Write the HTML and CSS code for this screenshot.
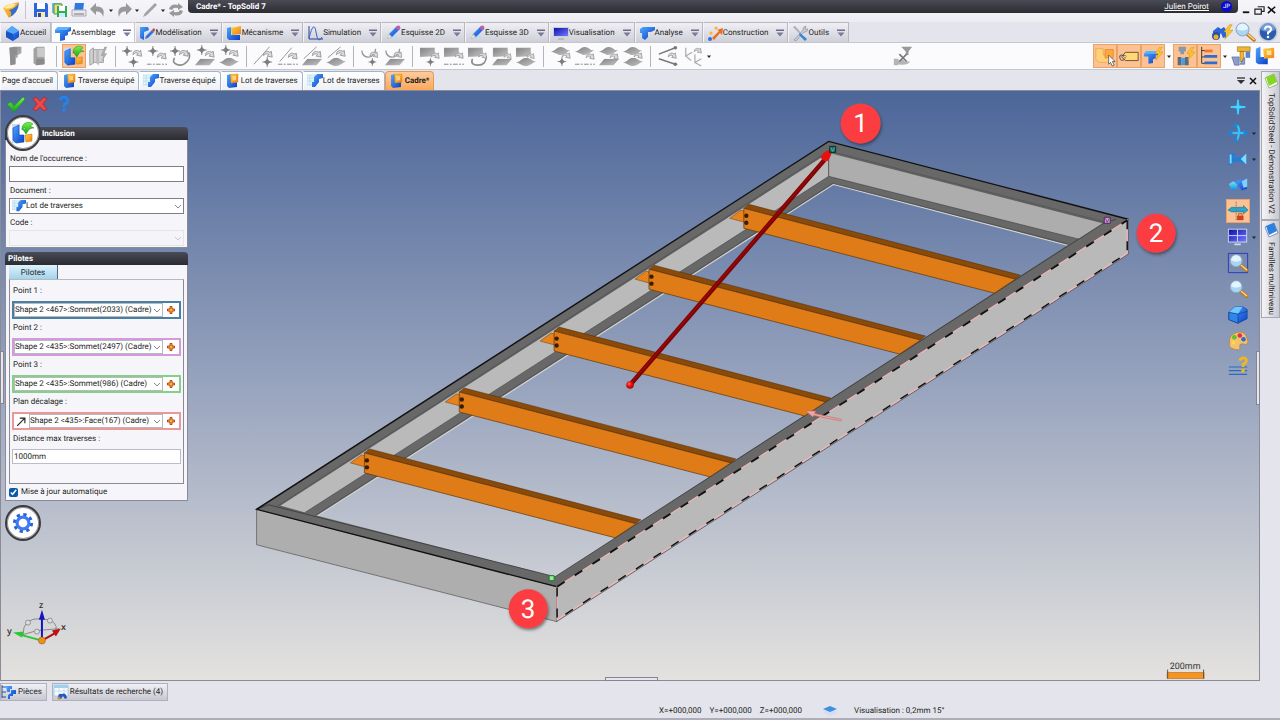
FILE: index.html
```html
<!doctype html>
<html lang="fr">
<head>
  <meta charset="UTF-8" />
  <meta name="viewport" content="width=device-width, initial-scale=1.0" />
  <title>Cadre* - TopSolid 7</title>
  <link rel="stylesheet" href="styles.css">
</head>
<body>
  <svg class="defs" aria-hidden="true">
    <defs>
      <linearGradient id="gBlue" x1="0" y1="0" x2="1" y2="1"><stop offset="0" stop-color="#4fa8ff"/><stop offset="1" stop-color="#0a3fc8"/></linearGradient>
      <linearGradient id="gOrange" x1="0" y1="0" x2="1" y2="1"><stop offset="0" stop-color="#ffd23c"/><stop offset="1" stop-color="#f07f14"/></linearGradient>
      <linearGradient id="gGray" x1="0" y1="0" x2="1" y2="1"><stop offset="0" stop-color="#808080"/><stop offset="1" stop-color="#c4c4c4"/></linearGradient>
      <linearGradient id="gCyan" x1="0" y1="0" x2="0" y2="1"><stop offset="0" stop-color="#6fe6ff"/><stop offset="1" stop-color="#1489dc"/></linearGradient>
      <linearGradient id="gGreen" x1="0" y1="0" x2="0" y2="1"><stop offset="0" stop-color="#7df04a"/><stop offset="1" stop-color="#17a81b"/></linearGradient>
      <linearGradient id="gScreen" x1="0" y1="0" x2="1" y2="1"><stop offset="0" stop-color="#1010a8"/><stop offset="1" stop-color="#6f7cff"/></linearGradient>
    </defs>

    <!-- grey building blocks, combined in the tool icons -->
    <symbol id="star" viewBox="0 0 10 10"><path d="M5 0v10M0 5h10" stroke="#8a8a8a"/><path d="M5 1.500L6.500 3.500L8.500 5L6.500 6.500L5 8.500L3.500 6.500L1.500 5L3.500 3.500Z" fill="#7c7c7c"/></symbol>
    <symbol id="swirl" viewBox="0 0 10 10"><path d="M.8 6C.8 2 4.500 .5 7.500 3L8.500 1.500L9.500 7.500L4.500 6.500L6 5C4.500 3.500 3 4 .8 6Z" fill="#dcdcdc" stroke="#8e8e8e" stroke-width=".8"/></symbol>
    <symbol id="sheet" viewBox="0 0 22 8"><path d="M6 0H22L16 7H0Z" fill="url(#gGray)"/></symbol>
    <symbol id="wave" viewBox="0 0 22 9"><path d="M0 5C5 5 6 0 11 0S17 4 22 4C17 6 15 9 11 9S5 6 0 5Z" fill="url(#gGray)"/></symbol>
    <symbol id="dash" viewBox="0 0 22 2"><path d="M0 1h22" stroke="#aaa" stroke-width="1.500" stroke-dasharray="5 1.500 2 1.500"/></symbol>
    <symbol id="plate" viewBox="0 0 16 11"><path d="M0 1H15V9L0 10Z" fill="url(#gGray)" stroke="#aaa" stroke-width=".6"/></symbol>
    <symbol id="hook" viewBox="0 0 18 12"><path d="M1 3C1 13 16 13 16 1" fill="none" stroke="#999" stroke-width="1.500"/></symbol>

    <!-- shared colour icons -->
    <symbol id="inclusion" viewBox="0 0 24 24"><path d="M1 3H7L9 2V22H1Z" fill="#cdd9ee"/><path d="M2 7L8 4V14H13V21L5 22L2 19Z" fill="url(#gBlue)" stroke="#0b46b8" stroke-width=".6"/><path d="M14 14L21 13V20L15 21Z" fill="url(#gOrange)" stroke="#d4781a" stroke-width=".6"/><path d="M11 9C10 2 18 -1 22 3L19 5L23 7C20.500 7 19.500 7.500 18 8.500L15 13L11.500 8L14.500 8.500C14 6.500 13 6 11 9Z" fill="url(#gGreen)" stroke="#0e8d16" stroke-width=".5"/></symbol>
    <symbol id="part" viewBox="0 0 16 16"><path d="M2 2L6 1V9H12V14L4 15L2 13Z" fill="url(#gBlue)"/><path d="M5.500 1.500L13 1V9L6 10Z" fill="url(#gOrange)" stroke="#e0861c" stroke-width=".5"/><path d="M7.500 3L11 3V7L7.500 7.500Z" fill="#ffd08a"/></symbol>
    <symbol id="beam" viewBox="0 0 16 16"><path d="M0 2H9V12H0Z" fill="#e2f5fc" stroke="#a7d3e6" stroke-width=".6"/><path d="M0 5H9M0 8H9M3 2V12" stroke="#a7d3e6" stroke-width=".6"/><path d="M7 4L10 1H16V5L12 6V9L8 14H5V9H7Z" fill="url(#gBlue)"/></symbol>
    <symbol id="frame" viewBox="0 0 16 16"><path d="M0 5L3 2H16V6L13 7V10L10 11V15L5 16V8H0Z" fill="url(#gBlue)"/><path d="M0 5L3 2H16L12 5Z" fill="#57b4ff"/></symbol>
    <symbol id="pencil" viewBox="0 0 16 16"><path d="M1 14Q5 11 13 13" stroke="#b9d9ff" stroke-width="2" fill="none"/><path d="M2 14L4 9L12 1L15 4L7 12Z" fill="url(#gBlue)"/><path d="M12 1Q14 0 15 1.500T15 4L13.500 5.500L10.500 2.500Z" fill="#c05fae"/><path d="M2 14L4 9L7 12Z" fill="#f5deb5"/></symbol>
    <symbol id="down" viewBox="0 0 8 8"><path d="M0 .5H8V2H0Z" fill="#6c6a8c"/><path d="M.5 3.500H7.500L4 7.500Z" fill="#7a7899"/></symbol>
    <symbol id="caret" viewBox="0 0 4 3"><path d="M0 .5H4L2 3Z" fill="#222"/></symbol>
    <symbol id="chev" viewBox="0 0 8 6"><path d="M1 1L4 4L7 1" fill="none" stroke="#888"/></symbol>
    <symbol id="plus" viewBox="0 0 8 8"><path d="M3 .5H5V3H7.500V5H5V7.500H3V5H.5V3H3Z" fill="#ffb32c" stroke="#b5451a" stroke-width="1"/></symbol>
    <symbol id="bolt" viewBox="0 0 10 16"><path d="M6 0L0 8H4L1 16L10 6H5L9 0Z" fill="#ffc827" stroke="#c98d13" stroke-width=".6"/></symbol>
    <symbol id="lens" viewBox="0 0 22 20"><path d="M13 12L20 18" stroke="#b8761c" stroke-width="3.500" stroke-linecap="round"/><path d="M14 12.500L20 17.500" stroke="#ffd873" stroke-width="1.500" stroke-linecap="round"/><circle cx="8.500" cy="7.500" r="6.500" fill="#a9d5f5" stroke="#8ea9bd"/><path d="M3 7A5.500 5.500 0 0 1 14 7Q8 10 3 7Z" fill="#e3f4ff"/></symbol>
  </svg>

  <header class="titlebar">
    <div class="quick">
      <svg class="logo" viewBox="0 0 18 18"><path d="M1 7L5 4L17 1L14 10L7 17Z" fill="url(#gOrange)"/><path d="M7 9Q13 8 17 2Q16 12 8 16Q11 12 7 9Z" fill="#2f6fd0"/><path d="M2 7Q7 2 14 3Q10 9 2 7Z" fill="#ffe9a0"/></svg>
      <span class="sep"></span>
      <button aria-label="Enregistrer"><svg viewBox="0 0 16 16"><path d="M1 1H14L15 3V15H1Z" fill="#2b66e0"/><path d="M4 1H12V7H4Z" fill="#fff"/><path d="M4 10H12V15H4Z" fill="#ffe9a0"/><path d="M5 11h3v4H5Z" fill="#284b9a"/></svg></button>
      <button aria-label="Enregistrer tout"><svg viewBox="0 0 16 16"><path d="M0 1H9V11H0Z" fill="#7fb0e8"/><path d="M2 2H10V12H2Z" fill="#f5da6e" stroke="#3a9b5c"/><path d="M5 4H15V15H5Z" fill="#2fae54"/><path d="M7 4H13V9H7Z" fill="#fff"/><path d="M7 11H13V15H7Z" fill="#cdeaff"/></svg></button>
      <button aria-label="Imprimer"><svg viewBox="0 0 16 16"><path d="M4 1H13L12 9H3Z" fill="#2d7be0"/><path d="M1 8H15V14H1Z" fill="#e8e8ec" stroke="#a9a9b3"/><path d="M3 12H13" stroke="#777"/></svg></button>
      <button class="wide" aria-label="Annuler"><svg viewBox="0 0 16 16"><path d="M0 7L6 1V4.500Q16 4 13 15Q12 9 6 9.500V13Z" fill="#999"/></svg><svg class="caret"><use href="#caret"/></svg></button>
      <button class="wide" aria-label="Rétablir"><svg viewBox="0 0 16 16"><path d="M16 7L10 1V4.500Q0 4 3 15Q4 9 10 9.500V13Z" fill="#999"/></svg><svg class="caret"><use href="#caret"/></svg></button>
      <button class="wide" aria-label="Esquisser"><svg viewBox="0 0 16 16"><path d="M1 15L3 11L13 1L15 3L5 13Z" fill="#a2a2a2"/></svg><svg class="caret"><use href="#caret"/></svg></button>
      <button aria-label="Actualiser"><svg viewBox="0 0 16 16"><path d="M1 7Q3 1 10 3V1L15 5L10 8V6Q5 5 4 8ZM15 9Q13 15 6 13V15L1 11L6 8V10Q11 11 12 8Z" fill="#999"/></svg></button>
    </div>
    <div class="title">
      <b>Cadre* - TopSolid 7</b>
      <a class="user" href="#">Julien Poirot</a>
      <span class="avatar">JP</span>
    </div>
    <div class="winbtns">
      <button aria-label="Réduire"><svg viewBox="0 0 12 12"><path d="M2 9h7" stroke="#111" stroke-width="2"/></svg></button>
      <button aria-label="Restaurer"><svg viewBox="0 0 12 12"><path d="M4 3H11V8H8M1 5.500H8V11H1Z" fill="none" stroke="#222" stroke-width="1.300"/></svg></button>
      <button aria-label="Fermer"><svg viewBox="0 0 12 12"><path d="M2 3L10 10M10 3L2 10" stroke="#111" stroke-width="1.800"/></svg></button>
    </div>
  </header>

  <nav class="ribbon">
    <button class="home"><svg viewBox="0 0 16 16"><path d="M2 6L8 1L15 6V12L9 16L2 12Z" fill="url(#gBlue)"/><path d="M2 6L8 1L15 6L9 9Z" fill="#58a8f8"/><path d="M9 9V16L2 12V6Z" fill="#1a54c4"/></svg>Accueil</button>
    <button class="active"><svg viewBox="0 0 16 16"><use href="#frame"/></svg>Assemblage<svg class="down"><use href="#down"/></svg></button>
    <button><svg viewBox="0 0 16 16"><path d="M1 2H9L10 5L5 7V15L1 13Z" fill="url(#gBlue)"/><path d="M6 14L7 11L13 5L15 7L9 13Z" fill="#2f74e0"/><path d="M13 5L15 3L16 5L15 7Z" fill="#c33"/></svg>Modélisation<svg class="down"><use href="#down"/></svg></button>
    <button><svg viewBox="0 0 16 16"><path d="M1 3L5 2V10H14V15H3L1 13Z" fill="url(#gBlue)"/><path d="M5 3L15 1V9L6 10Z" fill="url(#gOrange)"/></svg>Mécanisme<svg class="down"><use href="#down"/></svg></button>
    <button><svg viewBox="0 0 16 16"><path d="M2 1V14H16" fill="none" stroke="#2040a0"/><path d="M2 13Q7-6 9 7T15 12" fill="none" stroke="#3b62c8"/></svg>Simulation<svg class="down"><use href="#down"/></svg></button>
    <button><svg viewBox="0 0 16 16"><use href="#pencil"/></svg>Esquisse 2D<svg class="down"><use href="#down"/></svg></button>
    <button><svg viewBox="0 0 16 16"><use href="#pencil"/></svg>Esquisse 3D<svg class="down"><use href="#down"/></svg></button>
    <button><svg viewBox="0 0 16 16"><path d="M0 2H16V12H0Z" fill="#c9cede"/><path d="M1 3H15V11H1Z" fill="url(#gScreen)"/><path d="M5 13H11V15H5Z" fill="#bbb"/></svg>Visualisation<svg class="down"><use href="#down"/></svg></button>
    <button><svg viewBox="0 0 16 16"><path d="M1 4L4 2H16V5L12 7H9V12L6 15L3 13V8H1Z" fill="url(#gBlue)"/></svg>Analyse<svg class="down"><use href="#down"/></svg></button>
    <button><svg viewBox="0 0 16 16"><path d="M5 13L12 6L10 5L16 3L15 10L13 8L7 15Z" fill="#ef6a1a"/><circle cx="3" cy="14" r="2" fill="#2a74e8"/><circle cx="4" cy="8" r="1.500" fill="#ffb020"/><circle cx="9" cy="3" r="1.500" fill="#ffb020"/></svg>Construction<svg class="down"><use href="#down"/></svg></button>
    <button><svg viewBox="0 0 16 16"><path d="M2 15L11 5Q10 2 14 1L13 4L16 4Q15 8 12 7L4 16Z" fill="#c9ccd4" stroke="#868b96" stroke-width=".6"/><path d="M1 2L3 1L9 8L8 9Z" fill="#aab"/><path d="M8 8L15 14L13 16L7 10Z" fill="#2f86d6"/></svg>Outils<svg class="down"><use href="#down"/></svg></button>
    <div class="find">
      <button aria-label="Recherche rapide"><svg viewBox="0 0 22 20"><path d="M2 9L7 5L10 7L13 5L15 8V15L12 16L10 11L7 16H2Z" fill="#2c65d8"/><circle cx="5" cy="14" r="4" fill="#2450b0"/><circle cx="5" cy="15" r="2.500" fill="#f3b01c"/><use href="#bolt" x="13" y="1" width="9" height="18"/></svg></button>
      <button aria-label="Rechercher"><svg viewBox="0 0 22 20"><use href="#lens"/></svg></button>
      <button aria-label="Aide"><svg viewBox="0 0 20 20"><circle cx="10" cy="10" r="9" fill="#2a5cab" stroke="#c5cad6" stroke-width="1.500"/><path d="M3 8A7 7 0 0 1 17 8Q10 11 3 8Z" fill="#6f9bd8"/><path d="M7 7.500Q7 4.500 10 4.500T13 7.500Q13 9 10 10.500V12.500" fill="none" stroke="#fff" stroke-width="2"/><circle cx="10" cy="15" r="1.300" fill="#fff"/></svg></button>
    </div>
  </nav>

  <div class="toolbar">
    <button aria-label="Profil"><svg viewBox="0 0 24 24"><path d="M6 3L11 2H19V9L15 11V14H13V21L7 22Z" fill="url(#gGray)"/><path d="M6 3H14V11H12V21L7 22Z" fill="#8e8e8e"/></svg></button>
    <button aria-label="Pièce"><svg viewBox="0 0 24 24"><path d="M6 4L9 2H18V21L9 22L6 20Z" fill="#a2a2a2"/><path d="M10 3H18V13H10Z" fill="#c9c9c9"/><path d="M9 15H18V21L9 22Z" fill="#8a8a8a"/></svg></button>
    <span class="sep"></span>
    <button class="on" aria-label="Inclusion"><svg viewBox="0 0 24 24"><use href="#inclusion"/></svg></button>
    <button aria-label="Inclusion rapide"><svg viewBox="0 0 24 24"><path d="M3 6L7 3V20L3 22ZM7 5H18V19H7Z" fill="#d2d2d2" stroke="#a2a2a2"/><path d="M10 6L13 4V22L10 20Z" fill="#bcbcbc"/><path d="M19 2L15 12H18L15 20L22 9H19L22 2Z" fill="#aaa"/></svg></button>
    <span class="sep"></span>
    <button aria-label="Point vers point"><svg viewBox="0 0 24 24"><use href="#star" x="0" y="1" width="11" height="11"/><use href="#swirl" x="10" y="4" width="13" height="11"/><use href="#star" x="7" y="13" width="11" height="11"/></svg></button>
    <button aria-label="Point vers axe"><svg viewBox="0 0 24 24"><use href="#star" x="2" y="1" width="11" height="11"/><use href="#swirl" x="11" y="7" width="12" height="11"/><use href="#dash" x="1" y="20" width="22" height="2"/></svg></button>
    <button aria-label="Point vers courbe"><svg viewBox="0 0 24 24"><use href="#star" x="0" y="1" width="11" height="11"/><path d="M20 8C25 14 15 25 7 21Q2 19 5 14" fill="none" stroke="#8e8e8e" stroke-width="1.800"/><use href="#swirl" x="9" y="4" width="12" height="11"/></svg></button>
    <button aria-label="Point vers plan"><svg viewBox="0 0 24 24"><use href="#sheet" x="1" y="15" width="22" height="8"/><use href="#star" x="3" y="0" width="11" height="11"/><use href="#swirl" x="11" y="5" width="12" height="11"/></svg></button>
    <button aria-label="Point vers face"><svg viewBox="0 0 24 24"><use href="#wave" x="1" y="14" width="22" height="9"/><use href="#star" x="3" y="0" width="11" height="11"/><use href="#swirl" x="11" y="4" width="12" height="11"/></svg></button>
    <span class="sep"></span>
    <button aria-label="Axe vers point"><svg viewBox="0 0 24 24"><path d="M1 21L18 2" stroke="#8e8e8e"/><use href="#swirl" x="10" y="5" width="12" height="11"/><use href="#star" x="10" y="13" width="11" height="11"/></svg></button>
    <button aria-label="Axe vers axe"><svg viewBox="0 0 24 24"><path d="M3 18L16 3" stroke="#8e8e8e"/><use href="#swirl" x="11" y="7" width="12" height="11"/><use href="#dash" x="1" y="20" width="22" height="2"/></svg></button>
    <button aria-label="Axe vers plan"><svg viewBox="0 0 24 24"><use href="#sheet" x="1" y="15" width="22" height="8"/><path d="M3 15L17 2" stroke="#8e8e8e"/><use href="#swirl" x="11" y="5" width="12" height="11"/></svg></button>
    <button aria-label="Axe vers face"><svg viewBox="0 0 24 24"><use href="#wave" x="1" y="14" width="22" height="9"/><path d="M3 14L17 2" stroke="#8e8e8e"/><use href="#swirl" x="11" y="4" width="12" height="11"/></svg></button>
    <span class="sep"></span>
    <button aria-label="Courbe vers point"><svg viewBox="0 0 24 24"><use href="#hook" x="1" y="3" width="18" height="12"/><use href="#swirl" x="10" y="6" width="10" height="10"/><use href="#star" x="9" y="14" width="9" height="9"/></svg></button>
    <button aria-label="Courbe vers plan"><svg viewBox="0 0 24 24"><use href="#sheet" x="1" y="15" width="22" height="8"/><use href="#hook" x="1" y="3" width="18" height="12"/><use href="#swirl" x="10" y="6" width="10" height="10"/></svg></button>
    <span class="sep"></span>
    <button aria-label="Plan vers point"><svg viewBox="0 0 24 24"><use href="#plate" x="1" y="2" width="17" height="12"/><use href="#swirl" x="12" y="7" width="11" height="10"/><use href="#star" x="8" y="14" width="9" height="9"/></svg></button>
    <button aria-label="Plan vers axe"><svg viewBox="0 0 24 24"><use href="#plate" x="1" y="2" width="17" height="12"/><use href="#swirl" x="12" y="7" width="11" height="10"/><use href="#dash" x="1" y="20" width="22" height="2"/></svg></button>
    <button aria-label="Plan vers courbe"><svg viewBox="0 0 24 24"><use href="#plate" x="1" y="2" width="17" height="12"/><path d="M21 12Q21 22 12 22T6 15" fill="none" stroke="#8e8e8e" stroke-width="1.800"/><use href="#swirl" x="12" y="7" width="10" height="10"/></svg></button>
    <button aria-label="Plan vers plan"><svg viewBox="0 0 24 24"><use href="#sheet" x="1" y="15" width="22" height="8"/><use href="#plate" x="2" y="2" width="17" height="12"/><use href="#swirl" x="13" y="8" width="10" height="9"/></svg></button>
    <button aria-label="Plan vers face"><svg viewBox="0 0 24 24"><use href="#wave" x="1" y="14" width="22" height="9"/><use href="#plate" x="1" y="2" width="17" height="12"/><use href="#swirl" x="12" y="8" width="10" height="9"/></svg></button>
    <span class="sep"></span>
    <button aria-label="Face vers point"><svg viewBox="0 0 24 24"><use href="#wave" x="1" y="2" width="21" height="9"/><use href="#swirl" x="12" y="7" width="11" height="10"/><use href="#star" x="8" y="13" width="10" height="10"/></svg></button>
    <button aria-label="Face vers axe"><svg viewBox="0 0 24 24"><use href="#wave" x="1" y="2" width="21" height="9"/><use href="#swirl" x="12" y="8" width="11" height="10"/><use href="#dash" x="1" y="20" width="22" height="2"/></svg></button>
    <button aria-label="Face vers plan"><svg viewBox="0 0 24 24"><use href="#wave" x="1" y="2" width="21" height="9"/><use href="#sheet" x="1" y="15" width="22" height="8"/><use href="#swirl" x="12" y="8" width="11" height="10"/></svg></button>
    <button aria-label="Face vers face"><svg viewBox="0 0 24 24"><use href="#wave" x="1" y="2" width="21" height="9"/><use href="#wave" x="1" y="14" width="22" height="9"/><use href="#swirl" x="12" y="7" width="11" height="10"/></svg></button>
    <span class="sep"></span>
    <button aria-label="Angle"><svg viewBox="0 0 24 24"><path d="M20 3L2 10M2 15L20 21" stroke="#777" stroke-width="1.500"/><circle cx="20" cy="3" r="2" fill="#777"/><circle cx="20" cy="21" r="2" fill="#777"/><use href="#swirl" x="11" y="7" width="11" height="10"/></svg></button>
    <button class="split" aria-label="Repères"><svg viewBox="0 0 24 24"><path d="M3 3V12L10 8M3 12L9 17M13 10V19L20 15M13 19L20 23" fill="none" stroke="#aaa" stroke-width="1.300"/><use href="#swirl" x="11" y="2" width="10" height="9"/></svg><svg class="caret"><use href="#caret"/></svg></button>
    <span class="stretch"></span>
    <button aria-label="Filtre"><svg viewBox="0 0 24 24"><path d="M10 2H22L18 7V11H15V7Z" fill="#999"/><path d="M2 15H7V22H2ZM7 17Q12 14 14 18H20Q16 23 7 21Z" fill="#b5b5b5"/><path d="M8 10L16 18M16 10L8 18" stroke="#777" stroke-width="1.800"/></svg></button>
    <span class="stretch"></span>
    <button class="on" aria-label="Sélection de pièces"><svg viewBox="0 0 24 24"><path d="M2 4H10V11H18V19H6L2 16Z" fill="#ffd27a" stroke="#e0a040" stroke-width=".7"/><path d="M12 5H21V14H12Z" fill="#ffa63c" stroke="#d8841c" stroke-width=".7"/><path d="M16 11V21L18 19L20 23L22 22L20 18H23Z" fill="#fff" stroke="#444" stroke-width=".8"/></svg></button>
    <button class="on" aria-label="Étiquette"><svg viewBox="0 0 24 24"><path d="M4 13L8 8H22V17H8Z" fill="#ffd876" stroke="#6b4a2c"/><circle cx="7.500" cy="12.500" r="1.300" fill="#fff" stroke="#444" stroke-width=".6"/><path d="M7 12Q1 9 2 14T8 15" fill="none" stroke="#444"/></svg></button>
    <button class="on" aria-label="Profilé rapide"><svg viewBox="0 0 24 24"><g transform="translate(2 4)"><use href="#frame" width="16" height="17"/></g><use href="#bolt" x="14" y="2" width="9" height="15"/></svg></button>
    <svg class="caret"><use href="#caret"/></svg>
    <button class="on" aria-label="Assemblage vissé"><svg viewBox="0 0 24 24"><path d="M5 2H13V7H11V10H7V7H5Z" fill="#8b98a8"/><path d="M4 13H8V22H4ZM12 13H16V22H12Z" fill="#5f6b78"/><path d="M8 14H12V22H8Z" fill="#4a9be0"/><use href="#bolt" x="14" y="2" width="9" height="15"/></svg></button>
    <button class="on" aria-label="Arborescence"><svg viewBox="0 0 24 24"><path d="M4 2V20M4 6H8M4 13H8M4 20H8" fill="none" stroke="#333"/><path d="M7 5H16V8H7Z" fill="#f07828"/><path d="M7 11H21V14H7ZM7 18H21V21H7Z" fill="#2a6fd0"/></svg></button>
    <svg class="caret"><use href="#caret"/></svg>
    <button aria-label="Mesure"><svg viewBox="0 0 24 24"><path d="M8 2H22V7H8ZM11 7H15V18H11Z" fill="#f2b52c" stroke="#8a6a20" stroke-width=".6"/><path d="M17 7H22V14H17Z" fill="#5a84c8"/><path d="M2 13H10V22H5ZM15 14H16V21H11Z" fill="#8a9cc8" stroke="#4a5a90" stroke-width=".6"/></svg></button>
    <button aria-label="Boîte"><svg viewBox="0 0 24 24"><path d="M2 4L7 2V13H15V21H5L2 19Z" fill="url(#gBlue)"/><path d="M10 4L22 3V14L11 15Z" fill="url(#gOrange)"/><path d="M14 6H19V11H14Z" fill="#ffe0a0"/></svg></button>
  </div>

  <div class="work">
    <div class="center">
      <nav class="docs">
        <button class="plain">Page d'accueil</button>
        <button><svg viewBox="0 0 16 16"><use href="#part"/></svg>Traverse équipé</button>
        <button><svg viewBox="0 0 16 16"><use href="#beam"/></svg>Traverse équipé</button>
        <button><svg viewBox="0 0 16 16"><use href="#part"/></svg>Lot de traverses</button>
        <button><svg viewBox="0 0 16 16"><use href="#beam"/></svg>Lot de traverses</button>
        <button class="current"><svg viewBox="0 0 16 16"><use href="#part"/></svg>Cadre*</button>
        <div class="docmenu">
          <button aria-label="Liste des documents"><svg viewBox="0 0 8 8"><path d="M0 1H8" stroke="#222" stroke-width="1.200"/><path d="M0 3H8L4 7Z" fill="#333"/></svg></button>
          <button aria-label="Fermer le document"><svg viewBox="0 0 8 8"><path d="M1 1L7 7M7 1L1 7" stroke="#111" stroke-width="1.500"/></svg></button>
        </div>
      </nav>

      <main class="viewport">
        <svg class="scene" viewBox="0 90 1260 591" preserveAspectRatio="xMidYMid slice" role="img" aria-label="Cadre">
          <defs>
            <radialGradient id="ball" cx=".4" cy=".35" r=".7"><stop offset="0" stop-color="#ff8080"/><stop offset=".4" stop-color="#f01010"/><stop offset="1" stop-color="#a80000"/></radialGradient>
            <filter id="soft" x="-20%" y="-20%" width="150%" height="150%"><feDropShadow dx="1" dy="2" stdDeviation="1.500" flood-color="#222" flood-opacity=".55"/></filter>
            <g id="traverse">
              <path d="M350 463L361 455L365 456V467Z" fill="#e8821c" stroke="#7a4a10" stroke-width=".6"/>
              <path d="M364 453L369 449L641 520L636 524Z" fill="#8a4a0a" stroke="#4a2806" stroke-width=".5"/>
              <path d="M364 453L636 524L615 538L364 473Z" fill="#e07c18" stroke="#5e3608" stroke-width=".7"/>
              <circle cx="366.500" cy="460.500" r="2.200" fill="#3a1c06"/>
              <circle cx="366.500" cy="467.500" r="2.200" fill="#3a1c06"/>
            </g>
          </defs>

          <!-- frame: top faces, inner faces, outer faces -->
          <path fill-rule="evenodd" fill="#686868" d="M256 509.500L829 141L1129 219L556.500 587ZM317 516L834 184L1068 245L555 577Z"/>
          <path d="M279 506L829 152V176L304 513Z" fill="#bababa" stroke="#444" stroke-width=".6"/>
          <path d="M829 152L1105 223L1080 239L829 176Z" fill="#adadad" stroke="#444" stroke-width=".6"/>
          <path d="M317 516L834 184L1068 245" fill="none" stroke="#d2d2d2" stroke-width="1.200"/>
          <path d="M316 515L833 183L1068 243.500" fill="none" stroke="#444" stroke-width=".6"/>
          <path d="M276.500 506.500L829 150.500L1105 221.500" fill="none" stroke="#444" stroke-width=".5"/>
          <path d="M256 509.500L268 505L555 577L1104 223L1117 219" fill="none" stroke="#333" stroke-width=".7"/>
          <path d="M256 509.500L556.500 587V622L256 545Z" fill="#aeaeae" stroke="#555" stroke-width=".7"/>
          <path d="M556.500 587L1129 219V254L556.500 622Z" fill="#b9b9b9" stroke="#444" stroke-width=".7"/>
          <path d="M556.500 587L256 509.500L829 141L1129 219" fill="none" stroke="#111" stroke-width="1.400"/>
          <path d="M557 587L1128 220V253L557 620Z" fill="none" stroke="#f0b4b4" stroke-width="1.300"/>
          <path d="M557 587L1128 220" fill="none" stroke="#111" stroke-width="1.900" stroke-dasharray="9 12"/>
          <path d="M1128 220V253L557 620V587" fill="none" stroke="#111" stroke-width="1.500" stroke-dasharray="9 12"/>

          <use href="#traverse" x="380" y="-245"/>
          <use href="#traverse" x="285" y="-184"/>
          <use href="#traverse" x="190" y="-122"/>
          <use href="#traverse" x="95" y="-61"/>
          <use href="#traverse"/>

          <path d="M630 385L827 157" stroke="#7c0404" stroke-width="4.500"/>
          <path d="M629.500 385L826.500 157" stroke="#a00808" stroke-width="1.200"/>
          <circle cx="630" cy="385" r="3.800" fill="url(#ball)"/>
          <path d="M829 150L832 153L829 160Q824 163 821 157Q824 151 829 150Z" fill="#e81010"/>
          <path d="M806 411L816 411L815 413.500L842 419.500L841 421L814 415.500L813 417Z" fill="#f0a4a4" stroke="#c06a6a" stroke-width=".6"/>
          <path d="M830 146H836V152H830Z" fill="#1f7068" stroke="#0a2a28"/><path d="M831 147L833 151L835 147" fill="none" stroke="#46d0c0" stroke-width=".7"/>
          <path d="M1105 217H1111V223H1105Z" fill="#d49ae0" stroke="#4a2a58"/><path d="M1106 218L1108 222L1110 218" fill="none" stroke="#4a2a58" stroke-width=".7"/>
          <path d="M549 576H554V581H549Z" fill="#8ef090" stroke="#1f7a2a"/>

          <g class="mark" filter="url(#soft)"><circle cx="861" cy="123" r="20"/><circle cx="1157" cy="233" r="19.500"/><circle cx="528" cy="609" r="19.500"/></g>
          <g class="num"><text x="861" y="132">1</text><text x="1157" y="242">2</text><text x="528" y="618">3</text></g>

          <!-- axis triad -->
          <g fill="none" stroke="#8a8a8a"><path d="M22 635Q22 618 40 619T55 632M22 635L36 631L58 629"/></g>
          <g fill="#ddd" stroke="#777" stroke-width=".7"><circle cx="27" cy="623" r="2.500"/><circle cx="49" cy="621" r="2.500"/><circle cx="36" cy="632" r="2.500"/></g>
          <path d="M41 641L19 635" stroke="#27c832" stroke-width="2"/><path d="M12 633L23 632L21 638Z" fill="#27c832"/>
          <path d="M41 641L55 633" stroke="#b01010" stroke-width="2"/><path d="M60 629L51 631L55 637Z" fill="#c01010"/>
          <path d="M41 641V617" stroke="#1414c0" stroke-width="2"/><path d="M41 610L44 620H38Z" fill="#1414c0"/>
          <circle cx="41" cy="641" r="3.500" fill="#e8921c" stroke="#a85e0a" stroke-width=".6"/>
          <g class="axis"><text x="38" y="608">z</text><text x="6" y="634">y</text><text x="60" y="630">x</text></g>

          <path d="M1168 673H1205V679H1168Z" fill="#f69422" stroke="#b5681a" stroke-width=".6"/><path d="M1168.500 670V679M1204.500 670V679" stroke="#555"/>
          <text class="scale" x="1186" y="669">200mm</text>
        </svg>

        <div class="task">
          <div class="confirm">
            <button aria-label="Valider"><svg viewBox="0 0 20 16"><path d="M1 8L5 6L8 10L17 1L19 3L9 15H7Z" fill="url(#gGreen)" stroke="#189a1a" stroke-width=".6"/></svg></button>
            <button aria-label="Annuler"><svg viewBox="0 0 20 16"><path d="M3 3L6 1L10 5L14 1L17 3L13 8L17 13L14 15L10 11L6 15L3 13L7 8Z" fill="#e84848" stroke="#b82020" stroke-width=".8"/></svg></button>
            <button aria-label="Aide"><svg viewBox="0 0 20 16"><path d="M6 4Q7 1 10 1T14 4.500Q14 7 10 8.500V11" fill="none" stroke="#1c86f4" stroke-width="2.500"/><circle cx="10" cy="14" r="1.700" fill="#1c86f4"/></svg></button>
          </div>

          <section class="panel first">
            <span class="orb"><svg viewBox="0 0 24 24"><use href="#inclusion"/></svg></span>
            <h2>Inclusion</h2>
            <div class="body">
              <div class="field">
                <label for="nom">Nom de l'occurrence :</label>
                <input class="box" id="nom" type="text">
              </div>
              <div class="field">
                <label for="doc">Document :</label>
                <div class="drop">
                  <svg class="pic" viewBox="0 0 16 16"><use href="#beam"/></svg>
                  <select class="box" id="doc"><option>Lot de traverses</option></select>
                  <svg class="chev"><use href="#chev"/></svg>
                </div>
              </div>
              <div class="field">
                <label for="code">Code :</label>
                <div class="drop off">
                  <select class="box" id="code" disabled></select>
                  <svg class="chev"><use href="#chev"/></svg>
                </div>
              </div>
            </div>
          </section>

          <section class="panel">
            <h2>Pilotes</h2>
            <div class="body pilots">
              <button class="tab">Pilotes</button>
              <div class="sheet">
                <div class="field">
                  <label for="p1">Point 1 :</label>
                  <div class="picker blue">
                    <div class="drop"><select id="p1"><option>Shape 2 &lt;467&gt;:Sommet(2033) (Cadre)</option></select><svg class="chev"><use href="#chev"/></svg></div>
                    <button aria-label="Ajouter"><svg viewBox="0 0 8 8"><use href="#plus"/></svg></button>
                  </div>
                </div>
                <div class="field">
                  <label for="p2">Point 2 :</label>
                  <div class="picker violet">
                    <div class="drop"><select id="p2"><option>Shape 2 &lt;435&gt;:Sommet(2497) (Cadre)</option></select><svg class="chev"><use href="#chev"/></svg></div>
                    <button aria-label="Ajouter"><svg viewBox="0 0 8 8"><use href="#plus"/></svg></button>
                  </div>
                </div>
                <div class="field">
                  <label for="p3">Point 3 :</label>
                  <div class="picker green">
                    <div class="drop"><select id="p3"><option>Shape 2 &lt;435&gt;:Sommet(986) (Cadre)</option></select><svg class="chev"><use href="#chev"/></svg></div>
                    <button aria-label="Ajouter"><svg viewBox="0 0 8 8"><use href="#plus"/></svg></button>
                  </div>
                </div>
                <div class="field">
                  <label for="plan">Plan décalage :</label>
                  <div class="picker red">
                    <button class="dir" aria-label="Inverser"><svg viewBox="0 0 8 8"><path d="M0 8L7 1M2.500 1H7V5.500" fill="none" stroke="#222"/></svg></button>
                    <div class="drop"><select id="plan"><option>Shape 2 &lt;435&gt;:Face(167) (Cadre)</option></select><svg class="chev"><use href="#chev"/></svg></div>
                    <button aria-label="Ajouter"><svg viewBox="0 0 8 8"><use href="#plus"/></svg></button>
                  </div>
                </div>
                <div class="field">
                  <label for="dist">Distance max traverses :</label>
                  <input class="box pale" id="dist" type="text" value="1000mm">
                </div>
              </div>
              <label class="auto"><input type="checkbox" checked>Mise à jour automatique</label>
            </div>
          </section>

          <button class="orb gear" aria-label="Options"><svg viewBox="0 0 24 24"><circle cx="12" cy="12" r="9" fill="none" stroke="#2a62d8" stroke-width="4" stroke-dasharray="3.500 3.568"/><circle cx="12" cy="12" r="6.500" fill="none" stroke="#3f7cf0" stroke-width="3.500"/></svg></button>
        </div>

        <div class="views">
          <button aria-label="Translation"><svg viewBox="0 0 24 24"><path d="M12 3L14 10L21 12L14 14L12 21L10 14L3 12L10 10Z" fill="#2aa8f0"/><path d="M12 4V20M4 12H20" stroke="#4fe0ff" stroke-width="1.500"/></svg></button>
          <button class="split" aria-label="Rotation"><svg viewBox="0 0 24 24"><path d="M9 4Q14 4 13 12T9 20" fill="none" stroke="#35c0f8" stroke-width="2.500"/><path d="M3 12H21" fill="none" stroke="#35c0f8" stroke-width="2.500"/><path d="M11 1L6 4L11 7ZM11 23L6 20L11 17ZM1 12L6 8V16ZM23 12L18 8V16Z" fill="#1489dc"/></svg><svg class="caret"><use href="#caret"/></svg></button>
          <button class="split" aria-label="Vue"><svg viewBox="0 0 24 24"><path d="M2 6H9V9H6V10H15L20 6V18L15 15H6V18H2Z" fill="#1f7fd8"/><path d="M3 7H5V17H3ZM15 12L21 6V18Z" fill="#7fdcff"/></svg><svg class="caret"><use href="#caret"/></svg></button>
          <button aria-label="Caméra"><svg viewBox="0 0 24 24"><path d="M2 11L7 8L11 11V17L5 18Z" fill="url(#gCyan)"/><path d="M8 9L14 6L20 6L22 16L16 18L12 12Z" fill="url(#gBlue)"/><path d="M16 8L22 5V14L18 15Z" fill="#7fd0ff"/></svg></button>
          <button class="on" aria-label="Verrouiller la vue"><svg viewBox="0 0 24 24"><path d="M1 11L5 8H18V6L23 11L18 15V13H5Z" fill="#2aa4c8" stroke="#1a7094" stroke-width=".6"/><path d="M10 2V22" stroke="#777" stroke-dasharray="2 1"/><path d="M11 17H18V22H11Z" fill="#d04018"/><path d="M12.500 17V15H16.500V17" fill="none" stroke="#d04018"/></svg></button>
          <button class="split" aria-label="Fenêtres"><svg viewBox="0 0 24 24"><path d="M1 3H22V18H1ZM8 19H15V21H8Z" fill="#d4d8ec"/><path d="M2 4H21V17H2Z" fill="url(#gScreen)"/><path d="M11.500 4V17M2 10.500H21" stroke="#dde2ff"/></svg><svg class="caret"><use href="#caret"/></svg></button>
          <button aria-label="Zoom tout"><svg viewBox="0 0 24 24"><path d="M1.500 1.500H22.500V22.500H1.500Z" fill="none" stroke="#2a35b8"/><use href="#lens" x="1" y="2" width="23" height="20"/></svg></button>
          <button aria-label="Zoom"><svg viewBox="0 0 24 24"><use href="#lens" x="1" y="2" width="23" height="20"/></svg></button>
          <button aria-label="Rendu"><svg viewBox="0 0 24 24"><path d="M2 9L9 3H17L22 6V16L12 21L2 17Z" fill="url(#gBlue)" stroke="#0c3a90" stroke-width=".7"/><path d="M2 9L9 3H17L12 11Z" fill="#6cc8ff"/><path d="M12 11V21L2 17V9ZM12 11L22 8" fill="#2f86e8" stroke="#0c3a90" stroke-width=".7"/></svg></button>
          <button aria-label="Couleurs"><svg viewBox="0 0 24 24"><path d="M3 15Q1 6 10 3T22 9T17 15Q13 15 14 19T8 21T3 15Z" fill="#f2c070" stroke="#b07a30" stroke-width=".7"/><circle cx="8" cy="8" r="2.500" fill="#60c030"/><circle cx="14" cy="6" r="2.500" fill="#e03050"/><circle cx="18" cy="10" r="2.500" fill="#3068d8"/><circle cx="7" cy="14" r="2" fill="#ffe030"/></svg></button>
          <button aria-label="Analyse"><svg viewBox="0 0 24 24"><path d="M2 12H22M2 16H22M2 20H22" stroke="#2a6cc0" stroke-width="1.300"/><path d="M14 5Q15 2 18 2T21 5.500Q21 8 17.500 9V12" fill="none" stroke="#f0b81c" stroke-width="3"/><circle cx="17.500" cy="16" r="2" fill="#f0b81c"/></svg></button>
        </div>

        <span class="grip left"></span>
        <span class="grip right"></span>
        <span class="grip bottom"></span>
      </main>
    </div>

    <aside class="side">
      <button class="lib"><svg viewBox="0 0 16 16"><path d="M2 5L11 1L15 11L6 15Z" fill="#fff" stroke="#6a9a30" stroke-width=".6"/><path d="M3 4L11 1L14 9L6 13Z" fill="#84d42a"/></svg>TopSolid'Steel - Démonstration V2</button>
      <button class="fam"><svg viewBox="0 0 16 16"><path d="M2 5L11 1L15 11L6 15Z" fill="#fff" stroke="#305a9a" stroke-width=".6"/><path d="M3 4L11 1L14 9L6 13Z" fill="#2e80e0"/></svg>Familles multiniveau</button>
    </aside>
  </div>

  <div class="docked">
    <button><svg viewBox="0 0 16 16"><path d="M1 1V14M1 3H5M1 8H5M1 13H5" stroke="#334c90" fill="none"/><path d="M5 2H11V5H9V8H6ZM10 6H15V10H12V12H9V15H7V11L10 9Z" fill="url(#gBlue)"/></svg>Pièces</button>
    <button><svg viewBox="0 0 16 16"><path d="M1 1H15V12H1Z" fill="#f4fafe" stroke="#8cc0e0" stroke-width=".7"/><path d="M1 1H15V4H1Z" fill="#9fd0ee"/><path d="M1 7H15M6 1V12M11 1V12" stroke="#b0d4ea" stroke-width=".6"/><path d="M5 14Q5 9 9 10Q13 8 14 14L12 15L10 12L8 15Z" fill="#2856c0"/><circle cx="6" cy="14" r="1.500" fill="#c09020"/></svg>Résultats de recherche (4)</button>
  </div>

  <footer class="status">
    <span>X=+000,000</span><span>Y=+000,000</span><span>Z=+000,000</span>
    <svg viewBox="0 0 16 10"><path d="M0 6L8 3L16 6L8 10Z" fill="#d6dcf4"/><path d="M1 3L8 0L15 3L8 6Z" fill="#3c90e0"/></svg>
    <span>Visualisation : 0,2mm 15°</span>
  </footer>
</body>
</html>
```

FILE: styles.css
```css
:root {
  --bg: #e4e4ec;
  --line: #8b8b95;
  --text: #1e1e22;
  --dark: linear-gradient(#4b4b55, #2b2b33);
  --hot: #fcc293;
  --hot-line: #e8a468;
}
* { box-sizing: border-box; }
html, body { height: 100%; }
body {
  margin: 0;
  display: flex;
  flex-direction: column;
  overflow: hidden;
  background: var(--bg);
  border-bottom: 2px solid #aeaeb8;
  color: var(--text);
  font: 8px/12px Roboto, "Open Sans", sans-serif;
  text-rendering: geometricPrecision;
}
button, input, select { font: inherit; color: inherit; margin: 0; padding: 0; text-rendering: inherit; }
button {
  display: flex;
  align-items: center;
  justify-content: center;
  border: 0;
  background: none;
  white-space: nowrap;
}
svg { display: block; flex: none; }
.defs { position: absolute; width: 0; height: 0; }
.caret { width: 4px; height: 3px; }

/* title bar */
.titlebar { display: flex; height: 22px; flex: none; background: linear-gradient(#f6f6fa, #ececf2); }
.quick { display: flex; align-items: center; width: 188px; height: 20px; padding-left: 2px; }
.quick svg { width: 16px; height: 16px; }
.quick .logo { width: 18px; height: 18px; }
.quick .caret { width: 4px; height: 3px; }
.quick button { width: 19px; }
.quick .wide { width: 26px; gap: 3px; }
.quick .sep { width: 1px; height: 18px; margin: 0 5px; background: #c4c4cc; }
.title {
  flex: 1;
  display: flex;
  align-items: center;
  height: 13px;
  padding: 0 6px 0 8px;
  gap: 12px;
  background: var(--dark);
  border-radius: 0 0 4px 4px;
  color: #fff;
}
.title b { margin-right: auto; font-weight: 700; }
.user { color: #fff; }
.avatar {
  width: 11px;
  height: 11px;
  border-radius: 50%;
  background: #0a0ad0;
  font-size: 6px;
  line-height: 11px;
  text-align: center;
}
.winbtns { display: flex; align-items: center; width: 42px; padding: 0 2px; height: 18px; }
.winbtns button { flex: 1; }
.winbtns svg { width: 11px; height: 11px; }

/* ribbon tabs */
.ribbon { display: flex; height: 20px; flex: none; }
.ribbon > button {
  padding: 0 3px;
  border: 1px solid #b8b8c2;
  border-left-color: #f4f4f8;
  border-bottom: 0;
  background: linear-gradient(#efeff4, #cfcfd8);
}
.ribbon > button.active { background: #fcfcfe; border-color: #c8c8d0; }
.ribbon > .home { padding-right: 4px; }
.ribbon svg { width: 16px; height: 16px; }
.ribbon .down { width: 8px; height: 8px; margin-left: 8px; }
.find { display: flex; margin-left: auto; gap: 1px; padding-right: 1px; }
.find svg { width: 22px; height: 20px; }

/* tool bar */
.toolbar {
  display: flex;
  align-items: center;
  flex: none;
  height: 28px;
  padding: 0 3px;
  background: #fbfbfe;
  border: 1px solid #c6c6ce;
  border-width: 1px 0;
}
.toolbar button { width: 24px; height: 24px; }
.toolbar button svg { width: 22px; height: 22px; }
.toolbar .split { width: 33px; gap: 2px; }
.toolbar .split .caret, .toolbar > .caret { width: 4px; height: 3px; }
.toolbar > .caret { margin: 0 2px; }
.toolbar .sep { width: 1px; height: 21px; margin: 0 5px; background: #b4b4bc; }
.toolbar .stretch { flex: 1; }
.on { background: var(--hot); border: 1px solid var(--hot-line); }

/* document tabs */
.work { flex: 1; display: flex; min-height: 0; }
.center { flex: 1; display: flex; flex-direction: column; min-width: 0; }
.docs { display: flex; flex: none; height: 20px; padding-top: 1px; }
.docs > button {
  padding: 0 4px 0 3px;
  border: 1px solid #a4b4c8;
  border-bottom: 0;
  border-left-color: #fff;
  border-radius: 0 4px 0 0;
  background: linear-gradient(#fff, #eef0f6);
}
.docs > .plain { padding-left: 1px; }
.docs > .current { background: linear-gradient(#fdcb9c, #fba75c); border-color: #e39a58; font-weight: 700; border-radius: 4px 4px 0 0; }
.docs svg { width: 16px; height: 16px; }
.docmenu { display: flex; gap: 4px; margin-left: auto; padding-right: 3px; }
.docmenu svg { width: 8px; height: 8px; }

/* 3D view */
.viewport {
  position: relative;
  flex: 1;
  min-height: 0;
  border: 1px solid var(--line);
  background: linear-gradient(#4c6699, #98a4be 50%, #e4e2df);
}
.scene { position: absolute; inset: 0; width: 100%; height: 100%; }
.mark { fill: #fb3e42; }
.num { fill: #fff; font: 26px Roboto, sans-serif; text-anchor: middle; }
.axis { font: 600 9px "Open Sans", sans-serif; fill: #333; }
.scale { font: 9px Roboto, sans-serif; fill: #333; text-anchor: middle; }
.task { position: absolute; left: 4px; top: 5px; width: 183px; }
.confirm { display: flex; gap: 4px; padding-left: 1px; }
.confirm svg { width: 20px; height: 16px; }
.panel { position: relative; margin-bottom: 4px; }
.panel.first { margin-top: 15px; }
.panel h2 {
  margin: 0;
  padding-left: 3px;
  font-size: 8px;
  line-height: 13px;
  color: #fff;
  background: var(--dark);
  border-radius: 4px 4px 0 0;
}
.panel.first h2 { padding-left: 37px; }
.body { padding: 13px 4px 1px; background: #f6f6fa; display: flex; flex-direction: column; gap: 3px; border: 1px solid #8a8a98; border-top: 0; }
.first .body { padding-left: 3px; padding-right: 3px; }
.orb {
  width: 36px;
  height: 36px;
  display: flex;
  align-items: center;
  justify-content: center;
  border: 2px solid #3c3c40;
  border-radius: 50%;
  background: #fff;
  box-shadow: inset 0 0 0 1px #999;
}
.orb svg { width: 24px; height: 24px; }
.first .orb { position: absolute; left: 0; top: -12px; }
.field { display: flex; flex-direction: column; gap: 1px; }
.field > label { padding-left: 1px; }
.box { width: 100%; height: 16px; padding: 0 4px; border: 1px solid #7e7e88; background: #fff; border-radius: 0; }
.drop { position: relative; flex: 1; display: flex; }
.drop select { appearance: none; width: 100%; border-radius: 0; outline: 0; opacity: 1; }
.drop .chev { position: absolute; right: 2px; top: 50%; width: 8px; height: 6px; margin-top: -2px; }
.drop .pic { position: absolute; left: 3px; top: 1px; width: 14px; height: 14px; }
.drop .box { padding-left: 16px; }
.drop.off { opacity: .4; }
.drop.off .box { border-color: #ccc; background: #f4f4f8; }
.pilots { padding: 0 3px 2px; gap: 2px; }
.tab {
  align-self: flex-start;
  width: 49px;
  height: 15px;
  border-right: 1px solid #4a6a88;
  background: linear-gradient(#dff2fb, #9fd0ea);
}
.sheet { display: flex; flex-direction: column; gap: 3px; margin-top: -3px; padding: 5px 2px 19px; border: 1px solid #8a8a98; border-top-color: #b8b8c2; }
.sheet .field { gap: 4px; }
.picker { display: flex; height: 18px; border: 2px solid; background: #fff; }
.picker select { border: 1px solid #b8b8c0; background: #fff; }
.picker button { width: 16px; }
.picker svg:not(.chev) { width: 8px; height: 8px; }
.blue { border-color: #4a7fa4; }
.violet { border-color: #d49bdc; }
.green { border-color: #84d088; }
.red { border-color: #ec9898; }
.picker .dir { width: 15px; }
.picker .dir svg:not(.chev) { width: 9px; height: 9px; }
.pale { height: 15px; padding-left: 1px; border-color: #bcbcc6; }
.auto { display: flex; align-items: center; gap: 3px; height: 12px; }
.auto input { width: 9px; height: 9px; margin: 0; accent-color: #0a5aa8; }
.gear svg { width: 22px; height: 22px; }

.views { position: absolute; right: 9px; top: 4px; display: flex; flex-direction: column; gap: 2px; }
.views button { position: relative; width: 24px; height: 24px; }
.views button svg { width: 22px; height: 22px; }
.views .split .caret { position: absolute; right: -6px; top: 11px; width: 4px; height: 3px; }
.grip { position: absolute; border: 1px solid #85858f; background: #e6e6ee; }
.grip.left { left: -1px; top: 260px; width: 4px; height: 53px; }
.grip.right { right: -1px; top: 260px; width: 4px; height: 54px; }
.grip.bottom { left: 48%; bottom: -1px; width: 53px; height: 4px; }

/* library tabs on the right */
.side { width: 20px; padding: 1px 0 0 1px; flex: none; }
.side button {
  width: 19px;
  justify-content: flex-start;
  writing-mode: vertical-rl;
  gap: 4px;
  padding: 1px 0;
  border: 1px solid #a8a8b2;
  background: linear-gradient(90deg, #f4f4f8, #c9c9d2);
}
.side svg { width: 16px; height: 16px; }
.lib { min-height: 149px; }
.fam { min-height: 98px; }

/* bottom rows */
.docked { display: flex; gap: 5px; height: 20px; padding-top: 2px; flex: none; }
.docked button { gap: 1px; height: 18px; padding: 0 4px 0 0; border: 1px solid #b0b0ba; background: linear-gradient(#f0f0f5, #c8c8d2); }
.docked svg { width: 16px; height: 16px; }
.status { display: flex; align-items: center; gap: 8px; height: 17px; padding: 2px 0 0 659px; flex: none; }
.status svg { width: 16px; height: 10px; margin: 0 8px 0 12px; }
```
